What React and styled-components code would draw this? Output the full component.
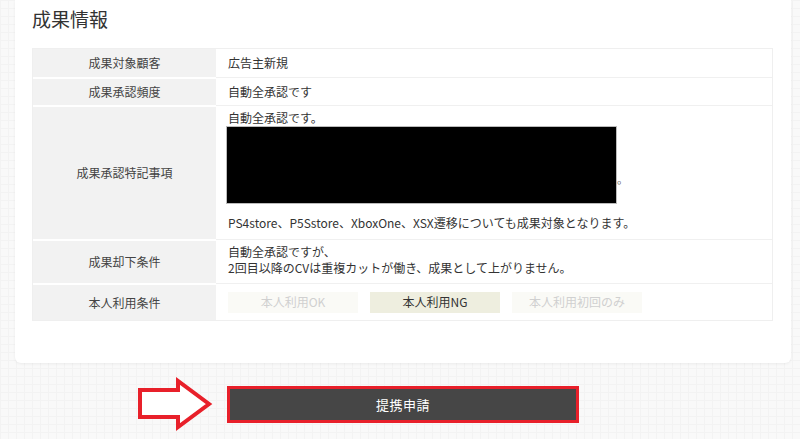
import React from 'react';
import styled, {createGlobalStyle} from 'styled-components';

const GlobalStyle = createGlobalStyle`
  html, body {
    margin: 0;
    padding: 0;
  }
  body {
    font-family: "Noto Sans CJK JP", "Noto Sans", sans-serif;
    color: #333;
    background-color: #f9f9f9;
    background-image:
      linear-gradient(to right, #f3f3f3 1px, transparent 1px),
      linear-gradient(to bottom, #f3f3f3 1px, transparent 1px);
    background-size: 8px 8px;
  }
`;

const Page = styled.div`
  width: 800px;
  height: 439px;
  padding: 0 9px 0 15px;
  box-sizing: border-box;
  overflow: hidden;
`;

const Card = styled.section`
  background: #fff;
  border-radius: 0 0 6px 6px;
  box-shadow: 0 1px 3px rgba(0, 0, 0, 0.06);
  padding: 4px 18px 42px 17px;
`;

const Title = styled.h2`
  margin: 0 0 14px;
  font-size: 19px;
  font-weight: 400;
  line-height: 30px;
  color: #333;
`;

const Table = styled.div`
  display: grid;
  grid-template-columns: 183px 1fr;
  border: 1px solid #efefef;
  font-size: 12px;
  line-height: 16px;
`;

const Label = styled.div`
  display: flex;
  align-items: center;
  justify-content: center;
  background: #f2f2f2;
  color: #444;
  height: ${p => p.h}px;
  border-top: ${p => (p.first ? 'none' : '2px solid #fff')};
  box-sizing: border-box;
`;

const Value = styled.div`
  display: flex;
  flex-direction: column;
  justify-content: ${p => (p.top ? 'flex-start' : 'center')};
  padding: ${p => (p.top ? '4px' : '0')} 12px 0 12px;
  height: ${p => p.h}px;
  box-sizing: border-box;
  border-top: ${p => (p.first ? 'none' : '1px solid #f0f0f0')};
  color: #333;
`;

const MaskRow = styled.div`
  display: flex;
  align-items: flex-end;
  margin: 0 0 11px -2px;
`;

const Mask = styled.div`
  width: 391px;
  height: 78px;
  background: #000;
  border: 1px solid #bbb;
  box-sizing: border-box;
`;

const Dot = styled.span`
  padding: 0 0 17px 0;
  font-size: 11px;
  color: #666;
`;

const PillRow = styled.div`
  display: flex;
  gap: 12px;
  align-items: center;
  height: 100%;
`;

const Pill = styled.div`
  width: 130px;
  height: 21px;
  display: flex;
  align-items: center;
  justify-content: center;
  background: ${p => (p.active ? '#eeeedf' : '#fafaf6')};
  color: ${p => (p.active ? '#333' : '#d0d0d0')};
`;

const ActionArea = styled.div`
  display: flex;
  justify-content: center;
  padding-top: 23px;
`;

const Highlight = styled.div`
  position: relative;
  border: 3px solid #e8202a;
`;

const SubmitButton = styled.button`
  display: block;
  width: 346px;
  height: 31px;
  border: none;
  background: #464646;
  color: #fff;
  font-family: "Noto Sans CJK JP", sans-serif;
  font-size: 13px;
  font-weight: 400;
  letter-spacing: 0.5px;
  cursor: pointer;
`;

const ArrowMark = styled.svg`
  position: absolute;
  left: -93px;
  top: -12px;
`;

const Arrow = () => (
  <ArrowMark width="76" height="54" viewBox="0 0 76 54">
    <polygon
      points="3,13 41,13 41,4 72,27 41,50 41,40 3,40"
      fill="#fff"
      stroke="#e8202a"
      strokeWidth="4"
      strokeLinejoin="miter"
    />
  </ArrowMark>
);

const rows = [
  {label: '成果対象顧客', h: 28, content: '広告主新規'},
  {label: '成果承認頻度', h: 28, content: '自動全承認です'},
];

export default function App() {
  return (
    <>
      <GlobalStyle />
      <Page>
        <Card>
          <Title>成果情報</Title>
          <Table>
            {rows.map((r, i) => (
              <React.Fragment key={r.label}>
                <Label h={r.h} first={i === 0}>{r.label}</Label>
                <Value h={r.h} first={i === 0}>{r.content}</Value>
              </React.Fragment>
            ))}
            <Label h={134}>成果承認特記事項</Label>
            <Value h={134} top>
              <div>自動全承認です。</div>
              <MaskRow>
                <Mask />
                <Dot>。</Dot>
              </MaskRow>
              <div>PS4store、P5Sstore、XboxOne、XSX遷移についても成果対象となります。</div>
            </Value>
            <Label h={44}>成果却下条件</Label>
            <Value h={44} top>
              <div>自動全承認ですが、</div>
              <div>2回目以降のCVは重複カットが働き、成果として上がりません。</div>
            </Value>
            <Label h={37}>本人利用条件</Label>
            <Value h={37}>
              <PillRow>
                <Pill>本人利用OK</Pill>
                <Pill active>本人利用NG</Pill>
                <Pill>本人利用初回のみ</Pill>
              </PillRow>
            </Value>
          </Table>
        </Card>
        <ActionArea>
          <Highlight>
            <Arrow />
            <SubmitButton>提携申請</SubmitButton>
          </Highlight>
        </ActionArea>
      </Page>
    </>
  );
}
